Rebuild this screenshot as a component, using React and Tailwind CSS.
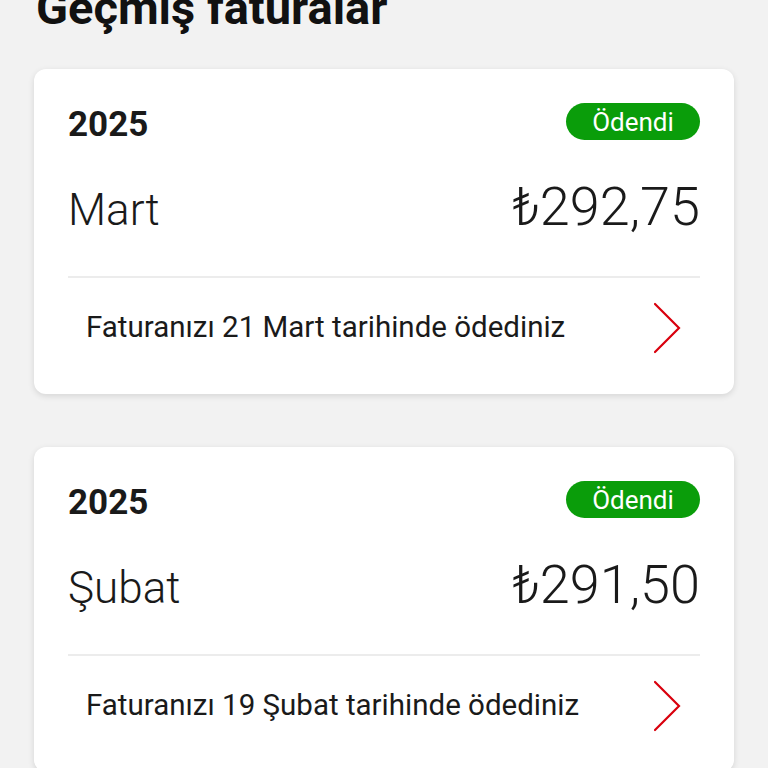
import React from 'react';

const bills = [
    { year: '2025', month: 'Mart', amount: '₺292,75', note: 'Faturanızı 21 Mart tarihinde ödediniz' },
    { year: '2025', month: 'Şubat', amount: '₺291,50', note: 'Faturanızı 19 Şubat tarihinde ödediniz' },
];

const Chevron = () => (
    <svg width="28" height="52" viewBox="0 0 28 52" fill="none">
        <polyline points="2,2 26,26 2,50" stroke="#d9000d" strokeWidth="2.2" strokeLinecap="round" strokeLinejoin="miter" />
    </svg>
);

const BillCard = ({ bill }) => (
    <div className="bg-white rounded-[12px] shadow-[0_2px_6px_rgba(0,0,0,0.12)] px-[34px] pt-[34px] pb-[16px]">
        <div className="flex items-center justify-between h-[37px]">
            <span className="mt-[6px] text-[35px] font-bold leading-none text-[#1a1a1a]">{bill.year}</span>
            <span className="h-[37px] w-[134px] rounded-full bg-[#0a9d0a] text-white text-[26px] leading-none flex items-center justify-center">
                Ödendi
            </span>
        </div>

        <div className="mt-[40px] flex items-baseline justify-between">
            <span className="text-[44px] font-light leading-none text-[#1a1a1a]">{bill.month}</span>
            <span className="text-[54px] font-light leading-none text-[#1a1a1a]">{bill.amount}</span>
        </div>

        <div className="mt-[42px] h-[2px] bg-[#ececec]" />

        <div className="h-[100px] flex items-center justify-between pl-[18px] pr-[19px]">
            <span className="text-[29.5px] leading-none text-[#1a1a1a]">{bill.note}</span>
            <Chevron />
        </div>
    </div>
);

export default function App() {
    return (
        <div className="min-h-screen bg-[#f2f2f2] px-[34px] overflow-hidden" style={{ fontFamily: 'Roboto, "Noto Sans", sans-serif' }}>
            <h1 className="-mt-[16px] pl-[2px] text-[47px] font-bold leading-none text-[#111]">Geçmiş faturalar</h1>
            <div className="mt-[38px] flex flex-col gap-[53px]">
                {bills.map((bill) => (
                    <BillCard key={bill.month} bill={bill} />
                ))}
            </div>
        </div>
    );
}
